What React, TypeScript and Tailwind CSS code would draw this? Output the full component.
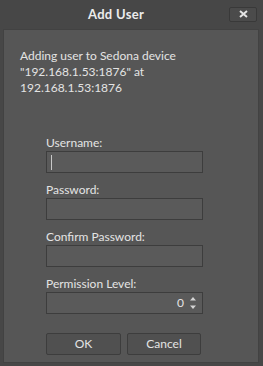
const Field = ({ label, children }: { label: string; children?: React.ReactNode }) => (
  <div className="flex flex-col">
    <span className="h-[16px] leading-[16px] text-[12px] text-[#e4e4e4]">{label}</span>
    <div className="h-[22px] w-[157px] border border-[#3d3d3d] bg-[#5a5a5a] flex items-center">
      {children}
    </div>
  </div>
);

const Spinner = () => (
  <svg width="8" height="16" viewBox="0 0 8 16" className="ml-[5px] mr-[5px]">
    <path d="M4 2 L7 5.5 L1 5.5 Z" fill="#d4d4d4" />
    <path d="M4 14 L7 10.5 L1 10.5 Z" fill="#d4d4d4" />
  </svg>
);

const AddUserDialog = () => {
  return (
    <div
      className="w-[263px] h-[366px] bg-[#474747] flex flex-col"
      style={{ fontFamily: 'Lato, "Noto Sans", sans-serif' }}
    >
      <div className="h-[29px] flex items-center">
        <div className="flex-1 flex justify-center pl-[3px]">
          <span className="text-[13px] font-bold text-[#ececec] tracking-[0.3px]">Add User</span>
        </div>
        <button className="mr-[6px] mt-[-1px] w-[28px] h-[15px] rounded-[2px] border border-[#393939] bg-[#4b4b4b] flex items-center justify-center">
          <svg width="9" height="8" viewBox="0 0 9 8">
            <path d="M1 1 L8 7 M8 1 L1 7" stroke="#e4e4e4" strokeWidth="2" />
          </svg>
        </button>
      </div>
      <div className="ml-[3px] mr-[4px] flex-1 mb-[3px] bg-[#565656] border border-[#424242] pt-[18px] pl-[16px]">
        <p className="text-[12px] leading-[16px] text-[#e4e4e4] w-[220px]">
          Adding user to Sedona device "192.168.1.53:1876" at 192.168.1.53:1876
        </p>
        <div className="mt-[39px] pl-[26px] flex flex-col gap-[9px]">
          <Field label="Username:">
            <div className="ml-[4px] w-px h-[15px] bg-[#c8c8c8]" />
          </Field>
          <Field label="Password:" />
          <Field label="Confirm Password:" />
          <Field label="Permission Level:">
            <span className="ml-auto text-[12px] text-[#e4e4e4]">0</span>
            <Spinner />
          </Field>
        </div>
        <div className="mt-[19px] pl-[26px] flex gap-[6px]">
          <button className="w-[75px] h-[22px] rounded-[2px] border border-[#3d3d3d] bg-[#505050] text-[12px] text-[#e4e4e4]">OK</button>
          <button className="w-[74px] h-[22px] rounded-[2px] border border-[#3d3d3d] bg-[#505050] text-[12px] text-[#e4e4e4]">Cancel</button>
        </div>
      </div>
    </div>
  );
};

export default function App() {
  return <AddUserDialog />;
}
